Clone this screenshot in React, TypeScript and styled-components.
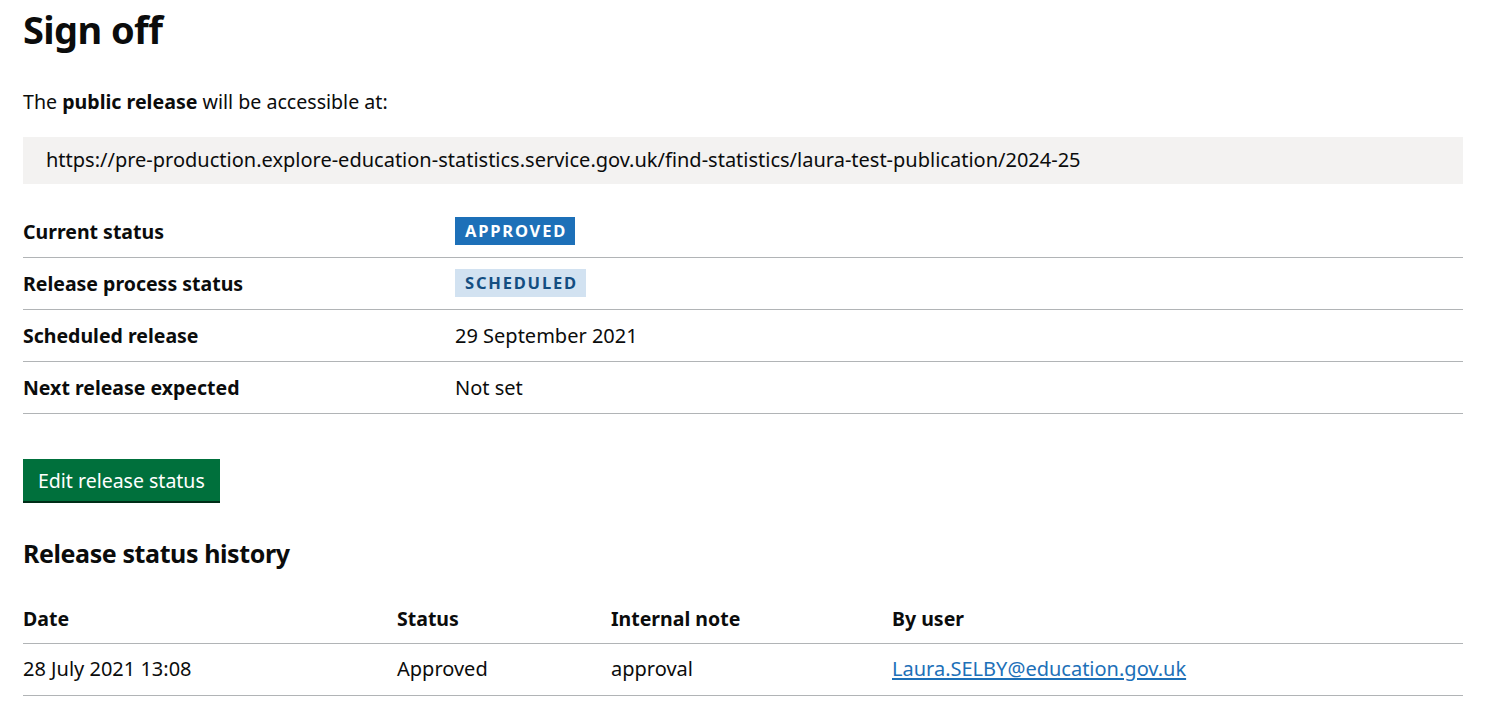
import React from 'react';
import styled, { createGlobalStyle } from 'styled-components';

const GlobalStyle = createGlobalStyle`
  body {
    margin: 0;
    background: #fff;
    color: #0b0c0c;
    font-family: "Noto Sans", "Liberation Sans", Arial, sans-serif;
  }
`;

const Page = styled.main`
  padding: 0 34px 0 23px;
`;

const Title = styled.h1`
  font-size: 38px;
  line-height: 1.1;
  font-weight: 700;
  margin: 9px 0 38px;
  letter-spacing: -0.6px;
`;

const Lead = styled.p`
  font-size: 19.6px;
  line-height: 25px;
  margin: 0 0 23px;
`;

const UrlBox = styled.div`
  background: #f3f2f1;
  padding: 10px 23px 12px;
  font-size: 20px;
  line-height: 25px;
  margin-bottom: 22px;
`;

const SummaryList = styled.dl`
  margin: 0 0 45px;
`;

const SummaryRow = styled.div`
  display: flex;
  border-bottom: 1px solid #b1b4b6;
  min-height: 51px;
  align-items: center;
  font-size: 20px;
  line-height: 25px;
`;

const Key = styled.dt`
  width: 30%;
  font-weight: 700;
  font-size: 19.5px;
`;

const Value = styled.dd`
  margin: 0;
  flex: 1;
`;

const Tag = styled.strong<{ $variant: 'blue' | 'light' }>`
  display: inline-block;
  font-size: 16.5px;
  line-height: 20px;
  font-weight: 700;
  letter-spacing: 1.8px;
  text-transform: uppercase;
  padding: 4px 8px 4px 10px;
  background: ${(p) => (p.$variant === 'blue' ? '#1d70b8' : '#d2e2f1')};
  color: ${(p) => (p.$variant === 'blue' ? '#fff' : '#144e81')};
`;

const Button = styled.button`
  display: inline-block;
  font-family: inherit;
  font-size: 19.5px;
  line-height: 25px;
  color: #fff;
  background: #00703c;
  border: none;
  padding: 9px 15px 8px;
  box-shadow: 0 2px 0 #002d18;
  margin: 0 0 37px;
  cursor: pointer;
`;

const SubTitle = styled.h2`
  font-size: 25px;
  line-height: 30px;
  font-weight: 700;
  margin: 0 0 38px;
  letter-spacing: -0.4px;
`;

const Table = styled.table`
  width: 100%;
  table-layout: fixed;
  border-collapse: collapse;
  font-size: 20px;
  line-height: 25px;
`;

const Th = styled.th<{ $w?: string }>`
  text-align: left;
  font-weight: 700;
  font-size: 19.5px;
  padding: 0 20px 12px 0;
  border-bottom: 1px solid #b1b4b6;
  width: ${(p) => p.$w || 'auto'};
`;

const Td = styled.td`
  padding: 12px 20px 14px 0;
  border-bottom: 1px solid #b1b4b6;
`;

const Link = styled.a`
  color: #1d70b8;
  text-decoration: underline;
  text-underline-offset: 2px;
`;

const rows = [
  { key: 'Current status', value: <Tag $variant="blue">Approved</Tag> },
  { key: 'Release process status', value: <Tag $variant="light">Scheduled</Tag> },
  { key: 'Scheduled release', value: '29 September 2021' },
  { key: 'Next release expected', value: 'Not set' },
];

export default function App() {
  return (
    <Page>
      <GlobalStyle />
      <Title>Sign off</Title>
      <Lead>
        The <strong>public release</strong> will be accessible at:
      </Lead>
      <UrlBox>
        https://pre-production.explore-education-statistics.service.gov.uk/find-statistics/laura-test-publication/2024-25
      </UrlBox>
      <SummaryList>
        {rows.map((r) => (
          <SummaryRow key={r.key}>
            <Key>{r.key}</Key>
            <Value>{r.value}</Value>
          </SummaryRow>
        ))}
      </SummaryList>
      <Button>Edit release status</Button>
      <SubTitle>Release status history</SubTitle>
      <Table>
        <thead>
          <tr>
            <Th $w="354px">Date</Th>
            <Th $w="194px">Status</Th>
            <Th $w="261px">Internal note</Th>
            <Th>By user</Th>
          </tr>
        </thead>
        <tbody>
          <tr>
            <Td>28 July 2021 13:08</Td>
            <Td>Approved</Td>
            <Td>approval</Td>
            <Td>
              <Link href="#">Laura.SELBY@education.gov.uk</Link>
            </Td>
          </tr>
        </tbody>
      </Table>
    </Page>
  );
}
